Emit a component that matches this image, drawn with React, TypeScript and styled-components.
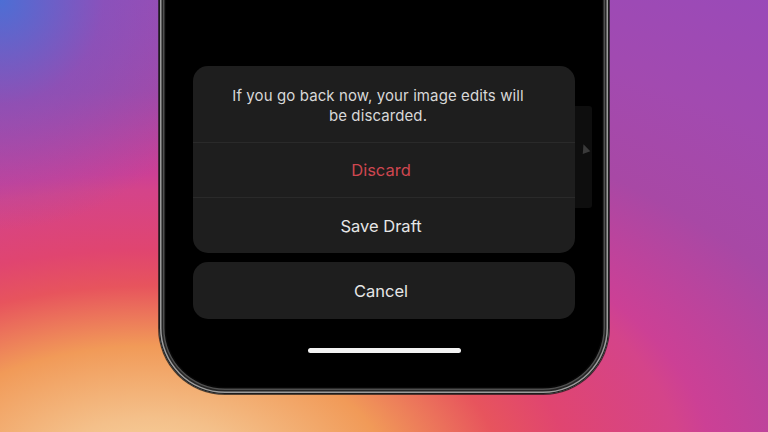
import styled, { createGlobalStyle } from "styled-components";

const GlobalStyle = createGlobalStyle`
  html, body {
    margin: 0;
    padding: 0;
    width: 100%;
    height: 100%;
    overflow: hidden;
  }
  #root {
    width: 100%;
    height: 100%;
  }
`;

const Stage = styled.main`
  width: 768px;
  height: 432px;
  overflow: hidden;
  display: flex;
  justify-content: center;
  align-items: flex-start;
  font-family: "Inter", "Liberation Sans", sans-serif;
  background:
    radial-gradient(circle 230px at 0 0, rgba(72, 112, 214, 0.95) 0%, rgba(110, 90, 200, 0.45) 45%, rgba(130, 80, 190, 0) 100%),
    radial-gradient(
      760px 400px at 150px 470px,
      #f8d5a2 0%,
      #f4c08a 13%,
      #f19a58 31%,
      #e7545d 46%,
      #e04570 55%,
      #d4448a 70%,
      #cc4095 74%,
      #a848a5 95%,
      #a24ab0 117%,
      #9a4ab8 143%
    );
`;

/* phone body — top runs off the page, so only the lower corners show */
const Phone = styled.section`
  position: relative;
  box-sizing: border-box;
  width: 450px;
  height: 414px;
  margin-top: -20px;
  padding: 86px 34px 0;
  background: #000;
  border-radius: 0 0 66px 66px;
  box-shadow:
    0 0 0 1px rgba(20, 20, 20, 0.7),
    inset 0 0 0 1px #1d1d1d,
    inset 0 0 0 2.5px #9c9c9c,
    inset 0 0 0 4px #262626,
    inset 0 0 0 5.5px #505050,
    inset 0 0 0 7px #070707;
  display: flex;
  flex-direction: column;
  align-items: center;
`;

/* dimmed editor panel sitting underneath the sheet */
const BehindPanel = styled.div`
  position: absolute;
  top: 126px;
  right: 17px;
  width: 180px;
  height: 102px;
  background: #0e0e0e;
  border-radius: 3px;

  &::before {
    content: "";
    position: absolute;
    right: 3px;
    top: 38px;
    width: 0;
    height: 0;
    border-left: 4px solid transparent;
    border-right: 4px solid transparent;
    border-bottom: 9px solid #3a3a3a;
    transform: rotate(-20deg);
  }
`;

const Sheet = styled.div`
  position: relative;
  z-index: 1;
  width: 100%;
  display: flex;
  flex-direction: column;
  gap: 9px;
`;

const Group = styled.div`
  background: #1e1e1e;
  border-radius: 15px;
  overflow: hidden;
  display: flex;
  flex-direction: column;
`;

const Message = styled.p`
  margin: 0;
  padding: 20px 46px 17px 34px;
  text-align: center;
  font-size: 15px;
  line-height: 19.5px;
  color: #d8d8d8;
  letter-spacing: 0.1px;
`;

const Action = styled.button<{ $danger?: boolean; $height?: number }>`
  appearance: none;
  border: none;
  border-top: 1px solid #2a2a2a;
  background: transparent;
  height: ${(p) => p.$height ?? 55}px;
  padding: 0 6px 0 0;
  font-family: inherit;
  font-size: 16.5px;
  font-weight: 400;
  color: ${(p) => (p.$danger ? "#cf4750" : "#e6e6e6")};
  cursor: pointer;

  &:first-child {
    border-top: none;
  }
`;

const HomeBar = styled.div`
  width: 153px;
  height: 5px;
  margin-top: 29px;
  border-radius: 3px;
  background: #f2f2f2;
`;

export default function App() {
  return (
    <>
      <GlobalStyle />
      <Stage>
        <Phone>
          <BehindPanel />
          <Sheet>
            <Group>
              <Message>
                If you go back now, your image edits will
                <br />
                be discarded.
              </Message>
              <Action $danger>Discard</Action>
              <Action $height={56}>Save Draft</Action>
            </Group>
            <Group>
              <Action $height={57}>Cancel</Action>
            </Group>
          </Sheet>
          <HomeBar />
        </Phone>
      </Stage>
    </>
  );
}
